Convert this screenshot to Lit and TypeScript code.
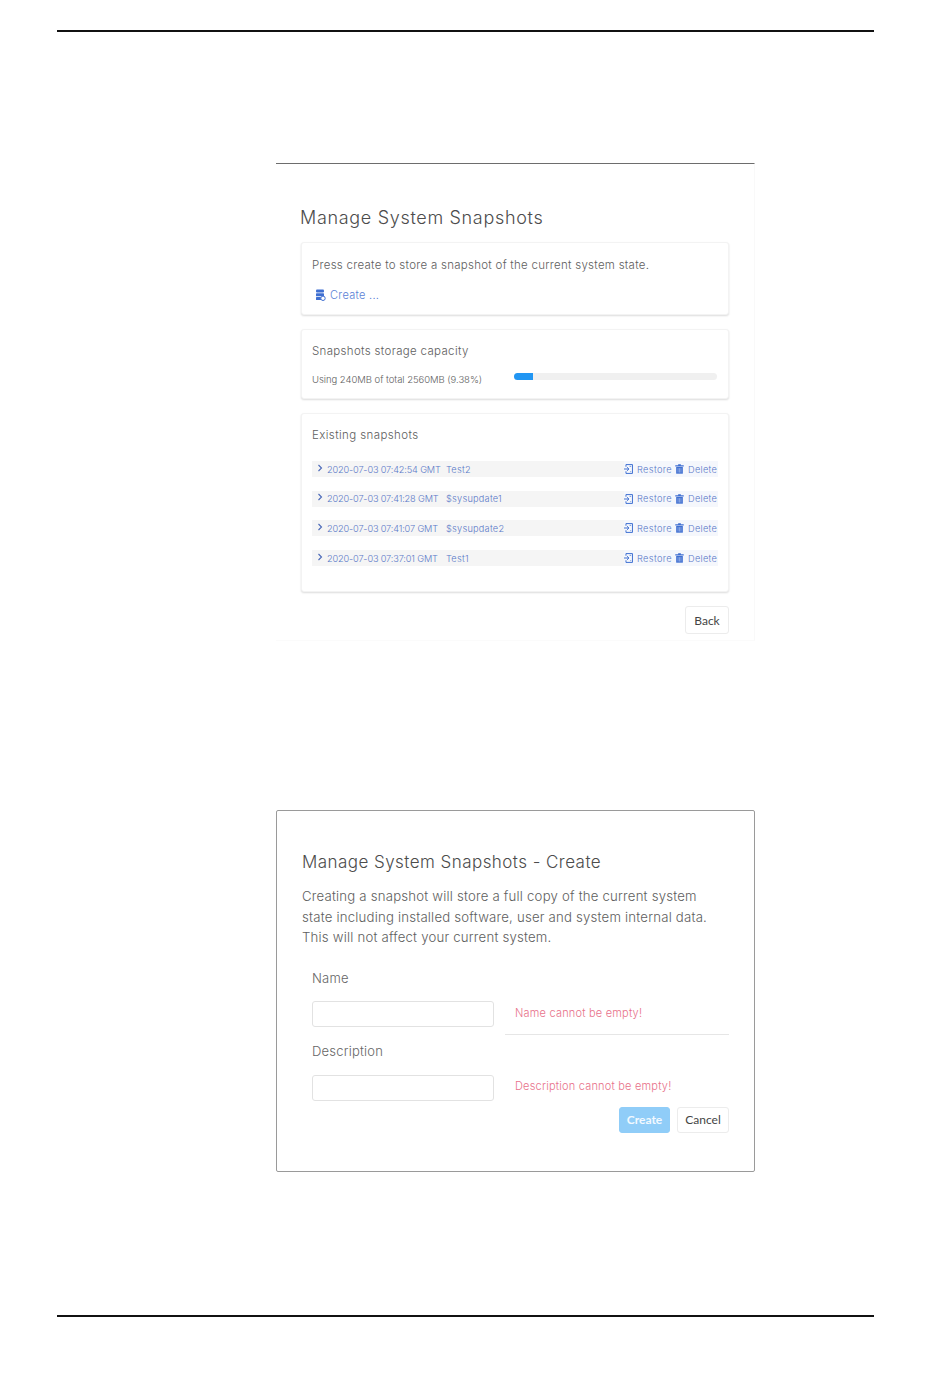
import { LitElement, html, css, svg } from "lit";
import { customElement } from "lit/decorators.js";

const BLUE = "#3f6fd1";

const restoreIcon = html`<svg class="ico" viewBox="0 0 10 11" width="9" height="10">
  <path d="M2.200 3V.6h7.200v9.800H2.200V8" fill="none" stroke="${BLUE}" stroke-width="1.100"/>
  <path d="M0 5.500h5M3.400 3.500l2.100 2-2.100 2" fill="none" stroke="${BLUE}" stroke-width="1.100"/>
  ${svg`<path d="M6.200 2.600h1.800M7 8.400h1" stroke="${BLUE}" stroke-width=".8"/>`}
</svg>`;

const trashIcon = html`<svg class="ico" viewBox="0 0 10 11" width="9" height="10">
  <path d="M3.500 0.300h3v1h3.200v1.300H.3V1.300h3.200z" fill="${BLUE}"/>
  <path d="M1.300 3.300h7.400V10.700H1.300z" fill="${BLUE}"/>
  ${svg`<path d="M3.400 4.500v5M5 4.500v5M6.600 4.500v5" stroke="#dfe7f7" stroke-width=".5"/>`}
</svg>`;

const dbIcon = html`<svg class="ico" viewBox="0 0 11 12" width="11" height="12">
  <rect x="1" y="0.500" width="8" height="3" rx="1" fill="${BLUE}"/>
  <rect x="1" y="4.300" width="8" height="3" rx=".6" fill="${BLUE}"/>
  <rect x="1" y="8.100" width="5" height="3" rx=".6" fill="${BLUE}"/>
  <circle cx="8" cy="9.300" r="2.200" fill="#fff" stroke="${BLUE}" stroke-width="1"/>
</svg>`;

const SNAPSHOTS = [
  ["2020-07-03 07:42:54 GMT", "Test2"],
  ["2020-07-03 07:41:28 GMT", "$sysupdate1"],
  ["2020-07-03 07:41:07 GMT", "$sysupdate2"],
  ["2020-07-03 07:37:01 GMT", "Test1"],
];

@customElement("app-root")
export class AppRoot extends LitElement {
  static styles = css`
    :host {
      display: block;
      height: 1378px;
      box-sizing: border-box;
      padding: 30px 76px 0 57px;
      font-family: Inter, "Open Sans", sans-serif;
      font-weight: 300;
      color: #4a4a4a;
      background: #fff;
    }
    .rule { height: 2px; background: #111; }
    .rule.bottom { margin-top: 143px; }
    .panel {
      box-sizing: border-box;
      width: 479px;
      margin-left: 219px;
    }
    .top {
      margin-top: 131px;
      height: 478px;
      padding: 43px 25px 0 24px;
      border-top: 1px solid #6d6d6d;
      border-right: 1px solid #f9f9f9;
      border-bottom: 1px solid #fbfbfb;
    }
    h2 {
      margin: 0;
      font-size: 18px;
      line-height: 22px;
      font-weight: 300;
      color: #4c4c4c;
      letter-spacing: .68px;
    }
    .create-panel h2 {
      font-size: 17px;
      letter-spacing: .45px;
    }
    .card {
      box-sizing: border-box;
      width: 428px;
      margin-left: 1px;
      background: #fff;
      border-radius: 3px;
      border: 1px solid #f3f3f3;
      box-shadow: 0 1px 2px rgba(0,0,0,.14);
      padding: 0 10px;
      margin-top: 14px;
    }
    .c1 { height: 73px; margin-top: 13px; padding-top: 14px; }
    .c2 { height: 70px; padding-top: 13px; }
    .c3 { height: 179px; padding-top: 13px; }
    .line { font-size: 11.500px; line-height: 16px; color: #5e5e5e; letter-spacing: .27px; }
    .c2 .line { letter-spacing: .33px; }
    .c3 .line { letter-spacing: .4px; }
    .link {
      display: flex;
      align-items: center;
      gap: 4px;
      margin-top: 14px;
      padding-left: 3px;
      font-size: 11px;
      line-height: 16px;
      color: #5a82d6;
      letter-spacing: .3px;
    }
    .cap {
      display: flex;
      align-items: center;
      margin-top: 13px;
      height: 14px;
    }
    .cap span { width: 202px; font-size: 9.500px; color: #5e5e5e; letter-spacing: -.04px; }
    .track {
      width: 203px;
      height: 7px;
      border-radius: 4px;
      background: #f0f0f0;
      overflow: hidden;
      margin-top: -5px;
    }
    .fill { height: 100%; background: #2196f3; }
    .rows { display: flex; flex-direction: column; gap: 13.700px; margin-top: 18px; }
    .row {
      display: flex;
      align-items: center;
      height: 16px;
      width: 406px;
      background: #f5f5f5;
      font-size: 9.200px;
      color: #5a78c8;
      white-space: nowrap;
    }
    .chev { width: 6px; margin: -3px 4px 0 5px; }
    .when { width: 119px; letter-spacing: -.15px; }
    .name { letter-spacing: .25px; }
    .acts {
      margin-left: auto;
      display: flex;
      align-items: center;
      background: #f5f7fc;
      height: 16px;
      padding-right: 1px;
      letter-spacing: .25px;
    }
    .acts .ico { margin-right: 4px; }
    .acts .r { margin-right: 3px; letter-spacing: .4px; }
    .ico { display: block; flex: none; }
    .bar { display: flex; justify-content: flex-end; margin-top: 14px; width: 429px; }
    button {
      box-sizing: border-box;
      font-family: Lato, "Open Sans", sans-serif;
      font-size: 12px;
      color: #444;
      background: #fff;
      border: 1px solid #ececec;
      border-radius: 3px;
      padding: 0;
      height: 28px;
    }
    .back { width: 44px; }
    .create-panel {
      margin-top: 169px;
      height: 362px;
      padding: 40px 25px 0 25px;
      border: 1px solid #9a9a9a;
      border-radius: 2px;
    }
    .intro {
      margin: 13px 0 0;
      font-size: 13.200px;
      line-height: 20.500px;
      color: #5e5e5e;
      white-space: nowrap;
      letter-spacing: .2px;
    }
    .form { padding-left: 10px; margin-top: 21px; }
    .lab { font-size: 13px; line-height: 18px; color: #666; letter-spacing: .2px; }
    .field { display: flex; margin-top: 14px; }
    .f2 { margin-top: 15px; }
    input {
      box-sizing: border-box;
      width: 182px;
      height: 26px;
      border: 1px solid #e2e2e2;
      border-radius: 3px;
      background: #fff;
      margin: 0;
      display: block;
    }
    .err {
      box-sizing: border-box;
      margin-left: 11px;
      width: 224px;
      height: 33px;
      padding: 3px 0 0 10px;
      font-size: 11px;
      line-height: 16px;
      color: #e8718a;
      letter-spacing: .2px;
    }
    .err.ruled { border-bottom: 1px solid #e6e6e6; height: 34px; padding-top: 4px; }
    .sec { margin-top: 7px; }
    .actions { display: flex; justify-content: flex-end; gap: 7px; margin-top: -1px; width: 417px; }
    .actions button { height: 26px; }
    .go { width: 51px; background: #90cdf8; border-color: #90cdf8; color: #f2f9ff; font-weight: 700; }
    .cancel { width: 52px; }
  `;

  render() {
    return html`
      <div class="rule"></div>

      <section class="panel top">
        <h2>Manage System Snapshots</h2>
        <div class="card c1">
          <div class="line">Press create to store a snapshot of the current system state.</div>
          <div class="link">${dbIcon}<span>Create ...</span></div>
        </div>
        <div class="card c2">
          <div class="line">Snapshots storage capacity</div>
          <div class="cap">
            <span>Using 240MB of total 2560MB (9.38%)</span>
            <div class="track"><div class="fill" style="width:9.38%"></div></div>
          </div>
        </div>
        <div class="card c3">
          <div class="line">Existing snapshots</div>
          <div class="rows">
            ${SNAPSHOTS.map(([when, name]) => html`
              <div class="row">
                <svg class="chev" viewBox="0 0 6 8" width="6" height="8"><path d="M1.500 1l3 3-3 3" fill="none" stroke="#4a68b8" stroke-width="1.100"/></svg>
                <span class="when">${when}</span>
                <span class="name">${name}</span>
                <div class="acts">
                  ${restoreIcon}<span class="r">Restore</span>
                  ${trashIcon}<span class="d">Delete</span>
                </div>
              </div>
            `)}
          </div>
        </div>
        <div class="bar"><button class="back">Back</button></div>
      </section>

      <section class="panel create-panel">
        <h2>Manage System Snapshots - Create</h2>
        <p class="intro">Creating a snapshot will store a full copy of the current system<br>state including installed software, user and system internal data.<br>This will not affect your current system.</p>
        <div class="form">
          <div class="lab">Name</div>
          <div class="field">
            <input type="text" aria-label="Name" />
            <div class="err ruled">Name cannot be empty!</div>
          </div>
          <div class="lab sec">Description</div>
          <div class="field f2">
            <input type="text" aria-label="Description" />
            <div class="err">Description cannot be empty!</div>
          </div>
          <div class="actions">
            <button class="go">Create</button>
            <button class="cancel">Cancel</button>
          </div>
        </div>
      </section>

      <div class="rule bottom"></div>
    `;
  }
}
